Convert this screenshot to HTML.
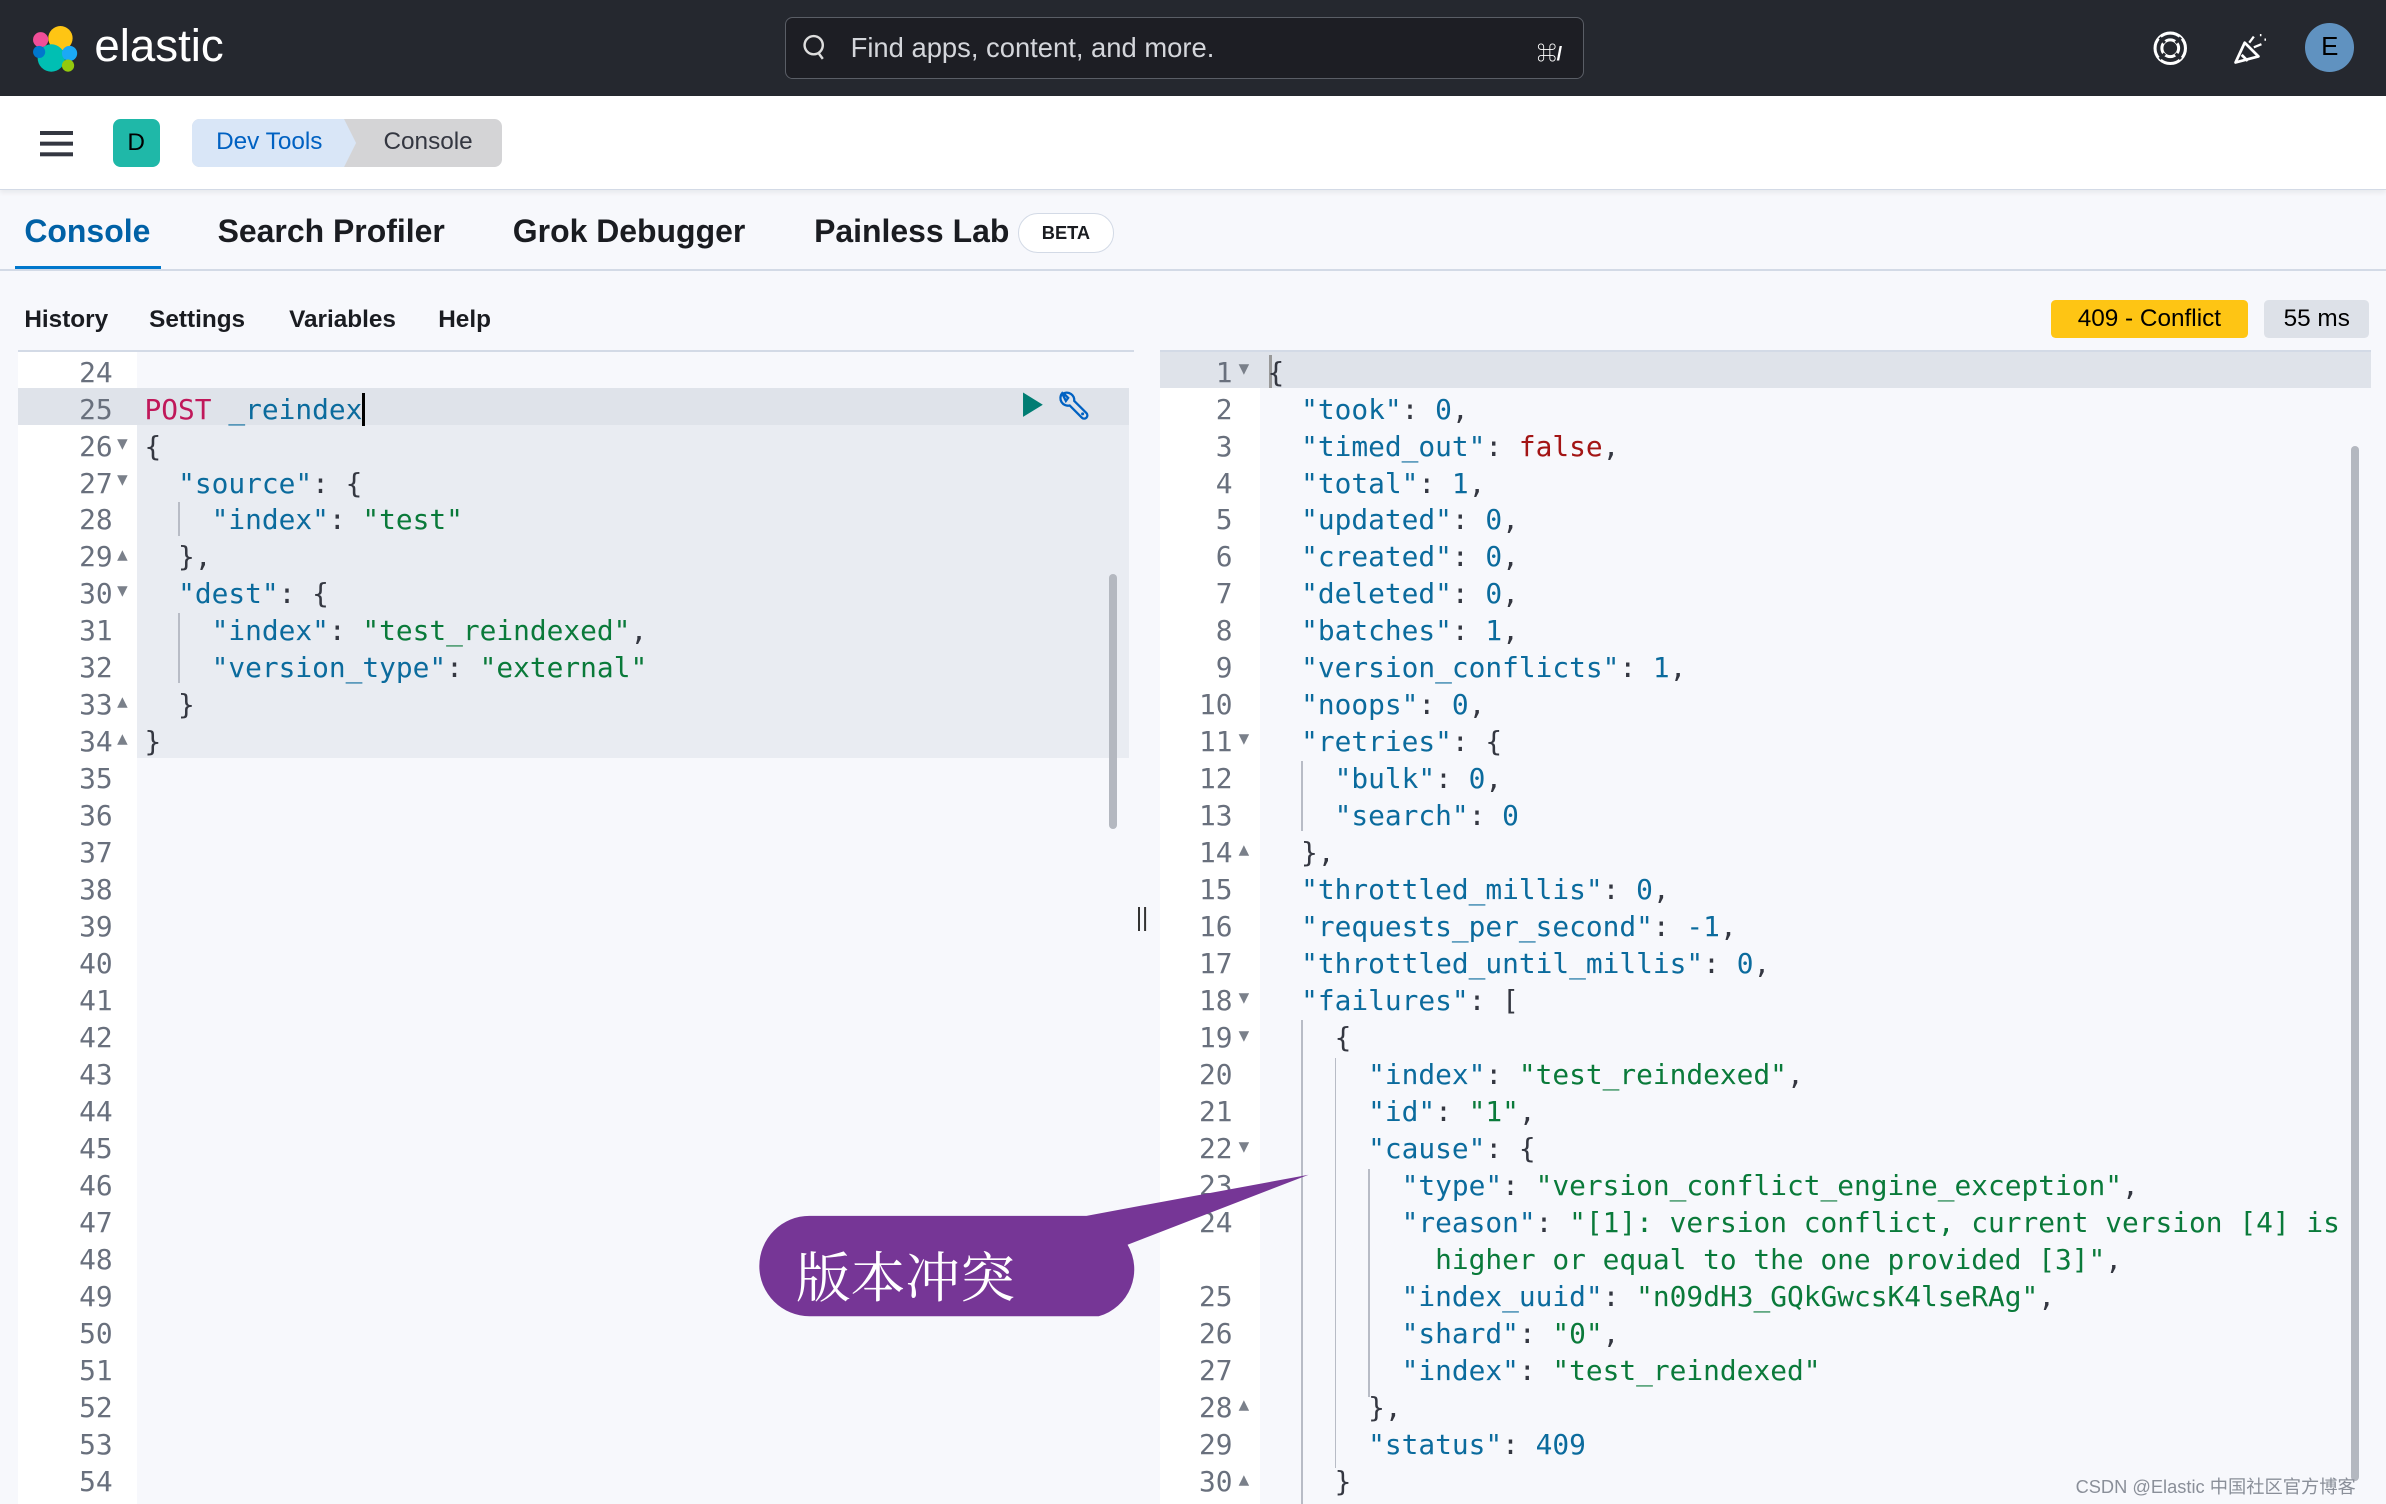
<!DOCTYPE html>
<html><head><meta charset="utf-8"><style>
*{margin:0;padding:0;box-sizing:border-box}
html,body{width:2386px;height:1504px;overflow:hidden;background:#f7f8fc}
#r{zoom:1.52168;width:1568px;height:989px;position:relative;font-family:"Liberation Sans","Noto Sans CJK SC",sans-serif;background:#f7f8fc;overflow:hidden}
.a{position:absolute}
.mono{font-family:"DejaVu Sans Mono","Liberation Mono",monospace;font-size:18.3px;line-height:24.3px;white-space:pre}
.ln{color:#69707d;text-align:right}
.k{color:#0b6b9d}.s{color:#0a7a3a}.n{color:#0b6b9d}.f{color:#a31515}.m{color:#c0185a}.p{color:#343741}
.g{position:absolute;width:1px;background:#b8bcc6}
.ar{position:absolute;color:#7a808a;font-size:9px;line-height:10px;font-family:"DejaVu Sans",sans-serif}
</style></head><body><div id="r">
<div class="a" style="left:0;top:0;width:1568px;height:63px;background:#25282f"></div>
<svg class="a" style="left:20px;top:15px" width="34" height="34" viewBox="0 0 34 34">
<circle cx="20" cy="10" r="8" fill="#fec514"/><circle cx="14" cy="23" r="9" fill="#00bfb3"/><circle cx="7" cy="11" r="5" fill="#f04e98"/><circle cx="26" cy="20" r="5" fill="#1ba9f5"/><circle cx="25" cy="28" r="4" fill="#93c90e"/><circle cx="6" cy="19" r="4" fill="#0077cc"/></svg>
<div class="a" style="left:62px;top:13px;color:#fff;font-size:30px">elastic</div>
<div class="a" style="left:516px;top:11px;width:525px;height:41px;border:1px solid #5a5e66;border-radius:5px;background:#1d1e24"></div>
<svg class="a" style="left:526px;top:22px" width="20" height="20" viewBox="0 0 20 20"><circle cx="9" cy="8" r="6" fill="none" stroke="#ddd" stroke-width="1.6"/><path d="M12 13l3 4" stroke="#ddd" stroke-width="1.6"/></svg>
<div class="a" style="left:559px;top:21px;color:#d4d6db;font-size:18px">Find apps, content, and more.</div>
<div class="a" style="left:1010px;top:24px;color:#fff;font-size:13px;font-weight:bold">⌘/</div>
<svg class="a" style="left:1414px;top:20px" width="24" height="24" viewBox="0 0 24 24"><circle cx="12" cy="12" r="10" fill="none" stroke="#fff" stroke-width="2"/><circle cx="12" cy="12" r="5.5" fill="none" stroke="#fff" stroke-width="2"/><path d="M5 5l3.5 3.5M19 5l-3.5 3.5M5 19l3.5-3.5M19 19l-3.5-3.5" stroke="#25282f" stroke-width="2"/></svg>
<svg class="a" style="left:1466px;top:19px" width="26" height="26" viewBox="0 0 26 26"><path d="M3 22l6-13 9 9z M7 17l4 4" fill="none" stroke="#fff" stroke-width="1.8" stroke-linejoin="round"/><path d="M12 9l3-4M15 12l5-2M19 4h1M22 7h1" stroke="#fff" stroke-width="1.5"/></svg>
<div class="a" style="left:1515px;top:15px;width:32px;height:32px;border-radius:50%;background:#6092c0;color:#000;font-size:17px;text-align:center;line-height:32px">E</div>
<div class="a" style="left:0;top:63px;width:1568px;height:62px;background:#fff;border-bottom:1px solid #d3dae6;box-shadow:0 2px 3px rgba(0,0,0,.06)"></div>
<div class="a" style="left:26px;top:86px;width:22px;height:3px;background:#343741;box-shadow:0 7px 0 #343741,0 14px 0 #343741"></div>
<div class="a" style="left:74px;top:78px;width:31px;height:32px;border-radius:5px;background:#1fb8a8;color:#000;text-align:center;line-height:32px;font-size:16px">D</div>
<div class="a" style="left:126px;top:78px;width:204px;height:32px;border-radius:5px;background:#d4d4d6"></div>
<div class="a" style="left:126px;top:78px;width:108px;height:32px;border-radius:5px 0 0 5px;background:#d9e6f7;clip-path:polygon(0 0,100px 0,108px 16px,100px 32px,0 32px)"></div>
<div class="a" style="left:142px;top:84px;color:#0061c2;font-size:16px">Dev Tools</div>
<div class="a" style="left:252px;top:84px;color:#343741;font-size:16px">Console</div>
<div class="a" style="left:16px;top:140px;color:#0061a6;font-size:21px;font-weight:bold">Console</div>
<div class="a" style="left:10px;top:175px;width:96px;height:3px;background:#0077cc"></div>
<div class="a" style="left:143px;top:140px;color:#1a1c21;font-size:21px;font-weight:bold">Search Profiler</div>
<div class="a" style="left:337px;top:140px;color:#1a1c21;font-size:21px;font-weight:bold">Grok Debugger</div>
<div class="a" style="left:535px;top:140px;color:#1a1c21;font-size:21px;font-weight:bold">Painless Lab</div>
<div class="a" style="left:669px;top:140px;width:63px;height:26px;border:1px solid #d3dae6;border-radius:13px;background:#fff;font-size:12px;font-weight:bold;text-align:center;line-height:25px;color:#1a1c21">BETA</div>
<div class="a" style="left:0;top:177px;width:1568px;height:1px;background:#d3dae6"></div>
<div class="a" style="left:16px;top:201px;font-size:16px;font-weight:bold;color:#1a1c21">History</div>
<div class="a" style="left:98px;top:201px;font-size:16px;font-weight:bold;color:#1a1c21">Settings</div>
<div class="a" style="left:190px;top:201px;font-size:16px;font-weight:bold;color:#1a1c21">Variables</div>
<div class="a" style="left:288px;top:201px;font-size:16px;font-weight:bold;color:#1a1c21">Help</div>
<div class="a" style="left:1348px;top:197px;width:129px;height:25px;border-radius:3px;background:#fec514;font-size:16px;text-align:center;line-height:25px;color:#000">409 - Conflict</div>
<div class="a" style="left:1488px;top:197px;width:69px;height:25px;border-radius:3px;background:#dde1e8;font-size:16px;text-align:center;line-height:25px;color:#000">55 ms</div>
<!-- left editor -->
<div class="a" style="left:12px;top:230px;width:733px;height:1px;background:#d3dae6"></div>
<div class="a" style="left:12px;top:231px;width:78px;height:760px;background:#fff"></div>
<div class="a" style="left:90px;top:231px;width:655px;height:760px;background:#f7f8fc"></div>
<div class="a" style="left:90px;top:255px;width:652px;height:243px;background:#e9ecf2"></div>
<div class="a" style="left:12px;top:255px;width:730px;height:24px;background:#dfe3ea"></div>
<div class="a" style="left:729px;top:377px;width:5px;height:168px;background:#b4b8c0;border-radius:3px"></div>
<svg class="a" style="left:670px;top:257px" width="16" height="18"><path d="M2 1l13 8-13 8z" fill="#017d73"/></svg>
<svg class="a" style="left:694px;top:255px" width="24" height="24" viewBox="0 0 24 24"><path d="M4 3.5a5 5 0 0 0 5 8l8 8a2 2 0 0 0 3-3l-8-8a5 5 0 0 0-7-5l3 3-1.5 2z" fill="none" stroke="#0061c2" stroke-width="1.5"/><circle cx="17.5" cy="17" r="1" fill="#0061c2"/></svg>
<div class="a mono ln" style="left:12px;top:233px;width:62px">24
25
26
27
28
29
30
31
32
33
34
35
36
37
38
39
40
41
42
43
44
45
46
47
48
49
50
51
52
53
54</div>
<div class="ar" style="left:77px;top:287px">▼</div>
<div class="ar" style="left:77px;top:311px">▼</div>
<div class="ar" style="left:77px;top:360px">▲</div>
<div class="ar" style="left:77px;top:384px">▼</div>
<div class="ar" style="left:77px;top:457px">▲</div>
<div class="ar" style="left:77px;top:481px">▲</div>
<div class="a mono p" style="left:95px;top:233px">
<span class="m">POST</span> <span class="n">_reindex</span><span style="border-left:2px solid #000"></span>
{
  <span class="k">"source"</span>: {
    <span class="k">"index"</span>: <span class="s">"test"</span>
  },
  <span class="k">"dest"</span>: {
    <span class="k">"index"</span>: <span class="s">"test_reindexed"</span>,
    <span class="k">"version_type"</span>: <span class="s">"external"</span>
  }
}</div>
<div class="g" style="left:117px;top:330px;height:22px"></div>
<div class="g" style="left:117px;top:403px;height:46px"></div>
<div class="a" style="left:748px;top:596px;width:1px;height:16px;background:#333;box-shadow:4px 0 0 #333"></div>
<!-- right editor -->
<div class="a" style="left:762px;top:230px;width:796px;height:1px;background:#d3dae6"></div>
<div class="a" style="left:762px;top:231px;width:66px;height:760px;background:#fff"></div>
<div class="a" style="left:828px;top:231px;width:730px;height:760px;background:#f7f8fc"></div>
<div class="a" style="left:762px;top:231px;width:796px;height:24px;background:#dfe3ea"></div>
<div class="a" style="left:834px;top:233px;width:2px;height:22px;background:#999"></div>
<div class="a" style="left:1545px;top:293px;width:5px;height:680px;background:#b4b8c0;border-radius:3px"></div>
<div class="a mono ln" style="left:762px;top:233px;width:48px">1
2
3
4
5
6
7
8
9
10
11
12
13
14
15
16
17
18
19
20
21
22
23
24

25
26
27
28
29
30</div>
<div class="ar" style="left:814px;top:238px">▼</div>
<div class="ar" style="left:814px;top:481px">▼</div>
<div class="ar" style="left:814px;top:554px">▲</div>
<div class="ar" style="left:814px;top:651px">▼</div>
<div class="ar" style="left:814px;top:676px">▼</div>
<div class="ar" style="left:814px;top:749px">▼</div>
<div class="ar" style="left:814px;top:919px">▲</div>
<div class="ar" style="left:814px;top:968px">▲</div>
<div class="a mono p" style="left:833px;top:233px">{
  <span class="k">"took"</span>: <span class="n">0</span>,
  <span class="k">"timed_out"</span>: <span class="f">false</span>,
  <span class="k">"total"</span>: <span class="n">1</span>,
  <span class="k">"updated"</span>: <span class="n">0</span>,
  <span class="k">"created"</span>: <span class="n">0</span>,
  <span class="k">"deleted"</span>: <span class="n">0</span>,
  <span class="k">"batches"</span>: <span class="n">1</span>,
  <span class="k">"version_conflicts"</span>: <span class="n">1</span>,
  <span class="k">"noops"</span>: <span class="n">0</span>,
  <span class="k">"retries"</span>: {
    <span class="k">"bulk"</span>: <span class="n">0</span>,
    <span class="k">"search"</span>: <span class="n">0</span>
  },
  <span class="k">"throttled_millis"</span>: <span class="n">0</span>,
  <span class="k">"requests_per_second"</span>: <span class="n">-1</span>,
  <span class="k">"throttled_until_millis"</span>: <span class="n">0</span>,
  <span class="k">"failures"</span>: [
    {
      <span class="k">"index"</span>: <span class="s">"test_reindexed"</span>,
      <span class="k">"id"</span>: <span class="s">"1"</span>,
      <span class="k">"cause"</span>: {
        <span class="k">"type"</span>: <span class="s">"version_conflict_engine_exception"</span>,
        <span class="k">"reason"</span>: <span class="s">"[1]: version conflict, current version [4] is</span>
<span class="s">          higher or equal to the one provided [3]"</span>,
        <span class="k">"index_uuid"</span>: <span class="s">"n09dH3_GQkGwcsK4lseRAg"</span>,
        <span class="k">"shard"</span>: <span class="s">"0"</span>,
        <span class="k">"index"</span>: <span class="s">"test_reindexed"</span>
      },
      <span class="k">"status"</span>: <span class="n">409</span>
    }</div>
<div class="g" style="left:855px;top:500px;height:46px"></div>
<div class="g" style="left:855px;top:670px;height:320px"></div>
<div class="g" style="left:877px;top:695px;height:270px"></div>
<div class="g" style="left:899px;top:768px;height:150px"></div>
<!-- annotation -->
<svg class="a" style="left:0;top:0" width="1568" height="989">
<path d="M532 799 L714 799 L860 772 L741 818 A32 32 0 0 1 722 865 L532 865 A33 33 0 0 1 532 799 Z" fill="#763696"/>
</svg>
<div class="a" style="left:523px;top:811px;color:#fff;font-size:36px;font-family:'Noto Serif CJK SC',serif">版本冲突</div>
<div class="a" style="left:1364px;top:968px;color:#8a8f99;font-size:12px">CSDN @Elastic 中国社区官方博客</div>
</div></body></html>
